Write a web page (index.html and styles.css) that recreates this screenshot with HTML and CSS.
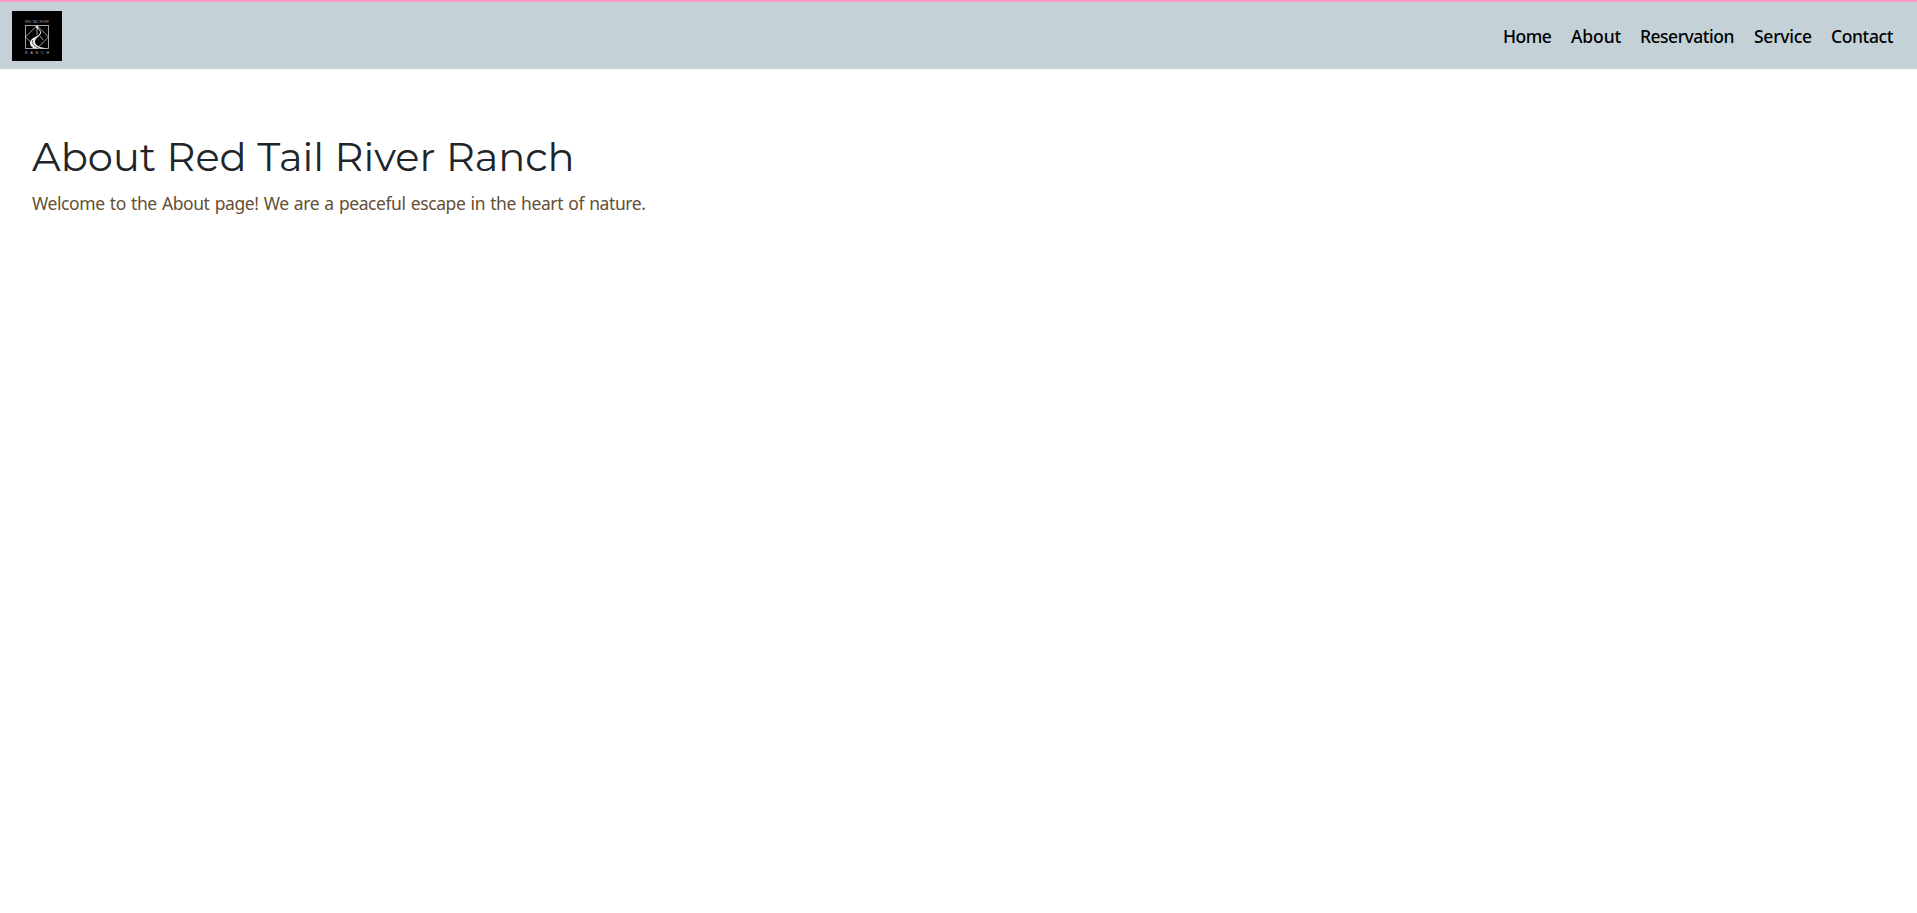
FILE: index.html
```html
<!DOCTYPE html>
<html lang="en">
<head>
<meta charset="utf-8">
<title>About Red Tail River Ranch</title>
<link rel="stylesheet" href="styles.css">
</head>
<body>
<header class="navbar">
  <a class="brand" href="#">
    <svg class="logo" viewBox="0 0 50 50" role="img" aria-label="Red Tail River Ranch">
      <rect width="50" height="50" fill="#000"/>
      <text class="logo-text" x="13" y="11.6" textLength="24">RED TAIL RIVER</text>
      <g fill="none" stroke="#c9c9c9" stroke-width=".8">
        <rect x="13.5" y="14.5" width="23" height="23"/>
        <path d="M25 14.500 36.500 26 25 37.500 13.500 26Z"/>
        <path d="M25 15v9M28 25l3 4"/>
      </g>
      <path d="M24 15c-1 3 5 3 4 7-1 4-10 4-10 10 0 3 2 4 4 5.500h13c-7-1-12-3-12-7 0-4 6-5 6-9 0-3-4-4-3-6.500Z" fill="#eee"/>
      <path d="M20.500 29c-1 4 3 7 7 8.500" fill="none" stroke="#111" stroke-width=".7"/>
      <text class="logo-text logo-text-lower" x="13" y="42.700" textLength="24">RANCH</text>
    </svg>
  </a>
  <nav class="links">
    <a class="link home" href="#">Home</a>
    <a class="link about" href="#">About</a>
    <a class="link reservation" href="#">Reservation</a>
    <a class="link service" href="#">Service</a>
    <a class="link contact" href="#">Contact</a>
  </nav>
</header>
<main class="content">
  <h1 class="title">About Red Tail River Ranch</h1>
  <p class="intro">Welcome to the About page! We are a peaceful escape in the heart of nature.</p>
</main>
</body>
</html>
```
FILE: styles.css
```css
* { box-sizing: border-box; }
body { margin: 0; background: #fff; font-family: "Segoe UI", "Noto Sans", sans-serif; font-size: 18px; }
.navbar { display: flex; align-items: center; justify-content: space-between; height: 69px; padding: 1px 23px 0 12px; border-top: 2px solid #ff9fc4; background: #c4d2d7; }
.brand, .logo { display: block; width: 50px; height: 50px; }
.logo-text { fill: #999; font: 3px "Liberation Sans", sans-serif; }
.logo-text-lower { fill: #bbb; font-size: 3.500px; }
.links { display: flex; gap: 20px; }
.link { color: #000; font-weight: 500; font-size: 17.500px; line-height: 27px; text-decoration: none; white-space: nowrap; }
.home { width: 48px; letter-spacing: -.5px; }
.about { width: 49px; letter-spacing: -.1px; }
.reservation { width: 93px; letter-spacing: -.5px; }
.service { width: 57px; margin-left: 1px; letter-spacing: -.25px; }
.contact { width: 63px; letter-spacing: -.4px; }
.content { padding: 64px 32px; }
.title { margin: 0 0 9px; color: #212529; font-family: Montserrat, sans-serif; font-size: 40px; font-weight: 400; line-height: 48px; white-space: nowrap; }
.intro { margin: 0; color: #654f36; font-size: 17.500px; line-height: 27px; letter-spacing: -.42px; word-spacing: 1.050px; white-space: nowrap; }
```
